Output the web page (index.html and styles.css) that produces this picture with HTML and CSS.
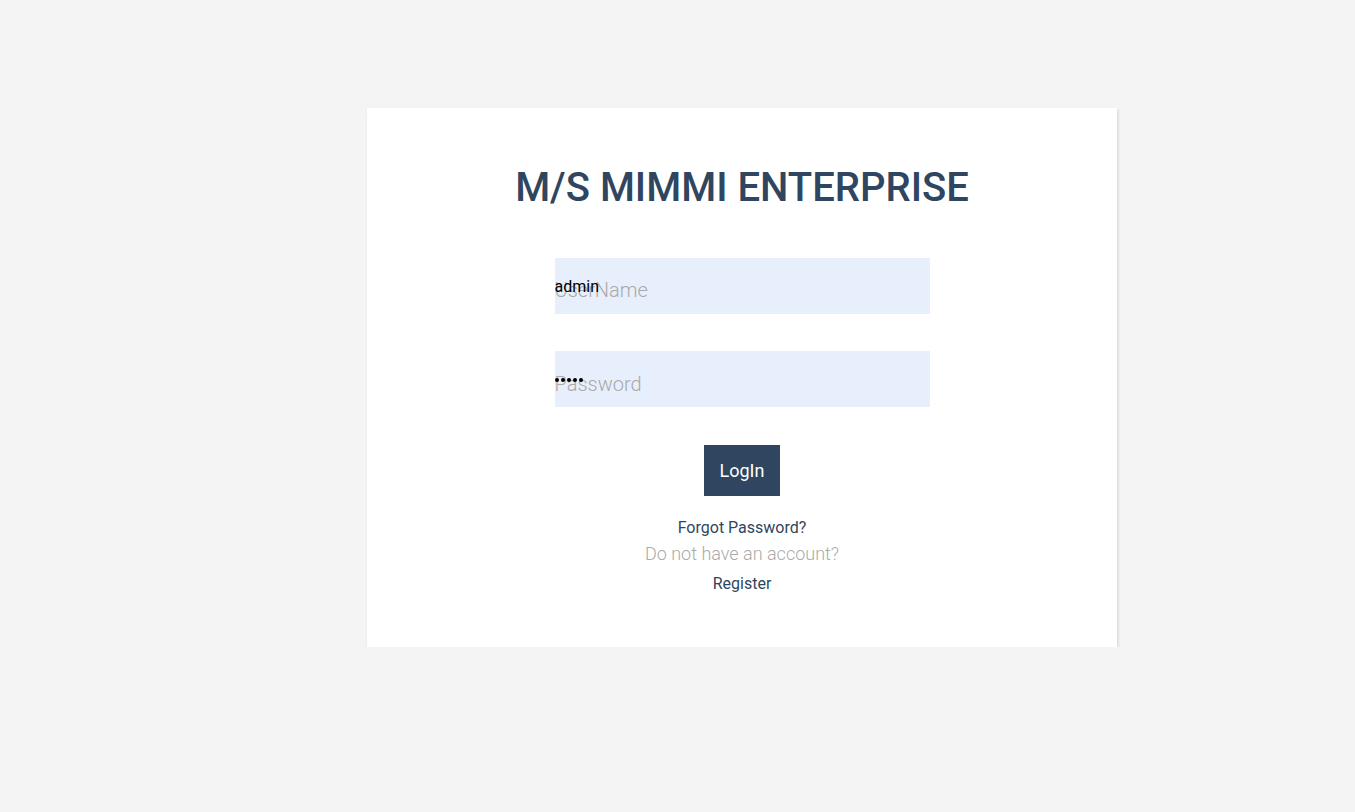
FILE: index.html
```html
<!DOCTYPE html>
<html>
<head>
<meta charset="utf-8">
<link rel="stylesheet" href="styles.css">
</head>
<body>
<div class="page">
  <div class="card">
    <h1 class="title">M/S MIMMI ENTERPRISE</h1>
    <form class="form">
      <div class="field">
        <input class="input" type="text" placeholder="UserName">
        <span class="preview">admin</span>
      </div>
      <div class="field">
        <input class="input" type="password" placeholder="Password">
        <span class="dots"><i></i><i></i><i></i><i></i><i></i></span>
      </div>
      <button class="btn" type="button">LogIn</button>
    </form>
    <a class="link forgot" href="#">Forgot Password?</a>
    <p class="muted">Do not have an account?</p>
    <a class="link register" href="#">Register</a>
  </div>
</div>
</body>
</html>
```
FILE: styles.css
```css
html, body {
  margin: 0;
  padding: 0;
  background: #f4f4f4;
  font-family: Roboto, "Liberation Sans", sans-serif;
}
.page {
  display: flex;
  justify-content: flex-start;
  padding-top: 108px;
  padding-left: 367px;
}
.card {
  width: 750px;
  height: 539px;
  box-sizing: border-box;
  background: #fff;
  box-shadow: 1px 2px 3px rgba(0,0,0,0.14);
  display: flex;
  flex-direction: column;
  align-items: center;
  padding-top: 56px;
}
.title {
  margin: 0;
  font-size: 40px;
  line-height: 48px;
  font-weight: 500;
  color: #2f4560;
  letter-spacing: 0;
}
.form {
  display: flex;
  flex-direction: column;
  align-items: center;
  margin-top: 46px;
}
.field {
  position: relative;
  width: 375px;
  height: 56px;
  margin-bottom: 37px;
}
.field:last-of-type {
  margin-bottom: 38px;
}
.input {
  width: 100%;
  height: 100%;
  box-sizing: border-box;
  border: none;
  outline: none;
  background: #e8effc;
  padding: 8px 0 0 0;
  font-family: Roboto, sans-serif;
  font-size: 20px;
  font-weight: 300;
  color: #222;
}
.input[type="password"] {
  padding-top: 10px;
}
.input::placeholder {
  color: #a9a9a9;
  opacity: 1;
}
.preview {
  position: absolute;
  left: 0;
  top: 19px;
  font-family: Roboto, sans-serif;
  font-size: 16px;
  color: #000;
  line-height: 19px;
}
.dots {
  position: absolute;
  left: 0;
  top: 27px;
  display: flex;
  gap: 2px;
}
.dots i {
  display: block;
  width: 4px;
  height: 4px;
  border-radius: 50%;
  background: #000;
}
.btn {
  width: 76px;
  height: 51px;
  border: none;
  background: #2f4560;
  color: #fff;
  font-family: Roboto, sans-serif;
  font-size: 18px;
  font-weight: 400;
  padding: 0;
}
.link {
  color: #2f4560;
  text-decoration: none;
  font-size: 16px;
  line-height: 19px;
}
.forgot {
  margin-top: 22px;
}
.muted {
  margin: 6px 0 0 0;
  color: #aaaaaa;
  font-size: 18px;
  font-weight: 300;
  line-height: 21px;
}
.register {
  margin-top: 10px;
}
```
